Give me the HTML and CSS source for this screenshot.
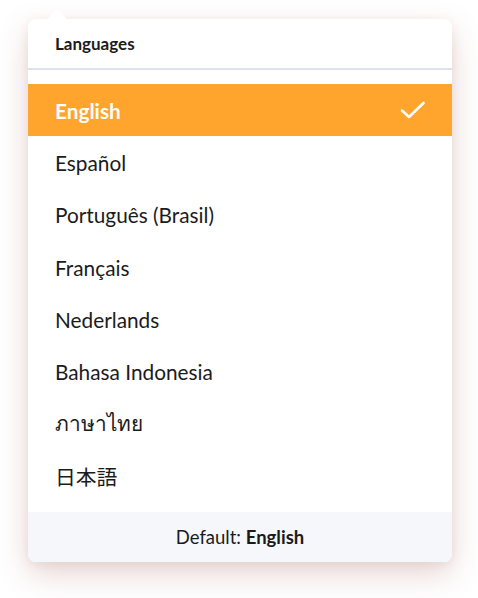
FILE: index.html
```html
<!DOCTYPE html>
<html lang="en">
<head>
  <meta charset="UTF-8">
  <meta name="viewport" content="width=device-width, initial-scale=1">
  <title>Languages</title>
  <link rel="stylesheet" href="styles.css">
</head>
<body>
  <div class="menu">
    <div class="menu-header">Languages</div>

    <ul class="lang-list">
      <li class="lang-item active">
        <span>English</span>
        <svg class="check" width="26" height="20" viewBox="0 0 26 20">
          <path d="M2 10.5 L9 17 L23.5 3" fill="none" stroke="#fff" stroke-width="2.6" stroke-linecap="round" stroke-linejoin="round"/>
        </svg>
      </li>
      <li class="lang-item">Español</li>
      <li class="lang-item">Português (Brasil)</li>
      <li class="lang-item">Français</li>
      <li class="lang-item">Nederlands</li>
      <li class="lang-item">Bahasa Indonesia</li>
      <li class="lang-item" lang="th">ภาษาไทย</li>
      <li class="lang-item" lang="ja">日本語</li>
    </ul>

    <div class="menu-footer">Default: <b>English</b></div>
  </div>
</body>
</html>
```

FILE: styles.css
```css
html, body {
  background: #fff;
}
body {
  margin: 0;
  min-height: 598px;
  box-sizing: border-box;
  padding: 19px 26px 0 28px;
  font-family: 'Lato', 'Noto Sans', 'Noto Sans CJK JP', sans-serif;
  color: #1b1b1b;
}
.menu {
  position: relative;
  background: #fff;
  border-radius: 8px;
  box-shadow: 0 12px 30px rgba(175, 115, 105, 0.3), 0 2px 10px rgba(175, 125, 115, 0.12);
}
/* little pointer above the header */
.menu::before {
  content: '';
  position: absolute;
  top: -7px;
  left: 22px;
  width: 14px;
  height: 14px;
  background: #fff;
  transform: rotate(45deg);
  border-radius: 2px;
}
.menu-header {
  position: relative;
  height: 49px;
  line-height: 50px;
  padding-left: 27px;
  font-size: 17px;
  font-weight: bold;
  border-bottom: 2px solid #dde3ee;
}
.lang-list {
  list-style: none;
  margin: 0;
  padding: 14px 0 10px;
}
.lang-item {
  display: flex;
  align-items: center;
  justify-content: space-between;
  height: 52.3px;
  padding: 0 27px;
  font-size: 20.8px;
}
.lang-item.active {
  background: #ffa42d;
  color: #fff;
  font-weight: bold;
}
.check {
  margin-right: -1px;
}
.menu-footer {
  height: 50px;
  line-height: 50px;
  text-align: center;
  background: #f6f7fb;
  border-radius: 0 0 8px 8px;
  font-size: 18.5px;
}
.menu-footer b {
  font-weight: bold;
}
```
